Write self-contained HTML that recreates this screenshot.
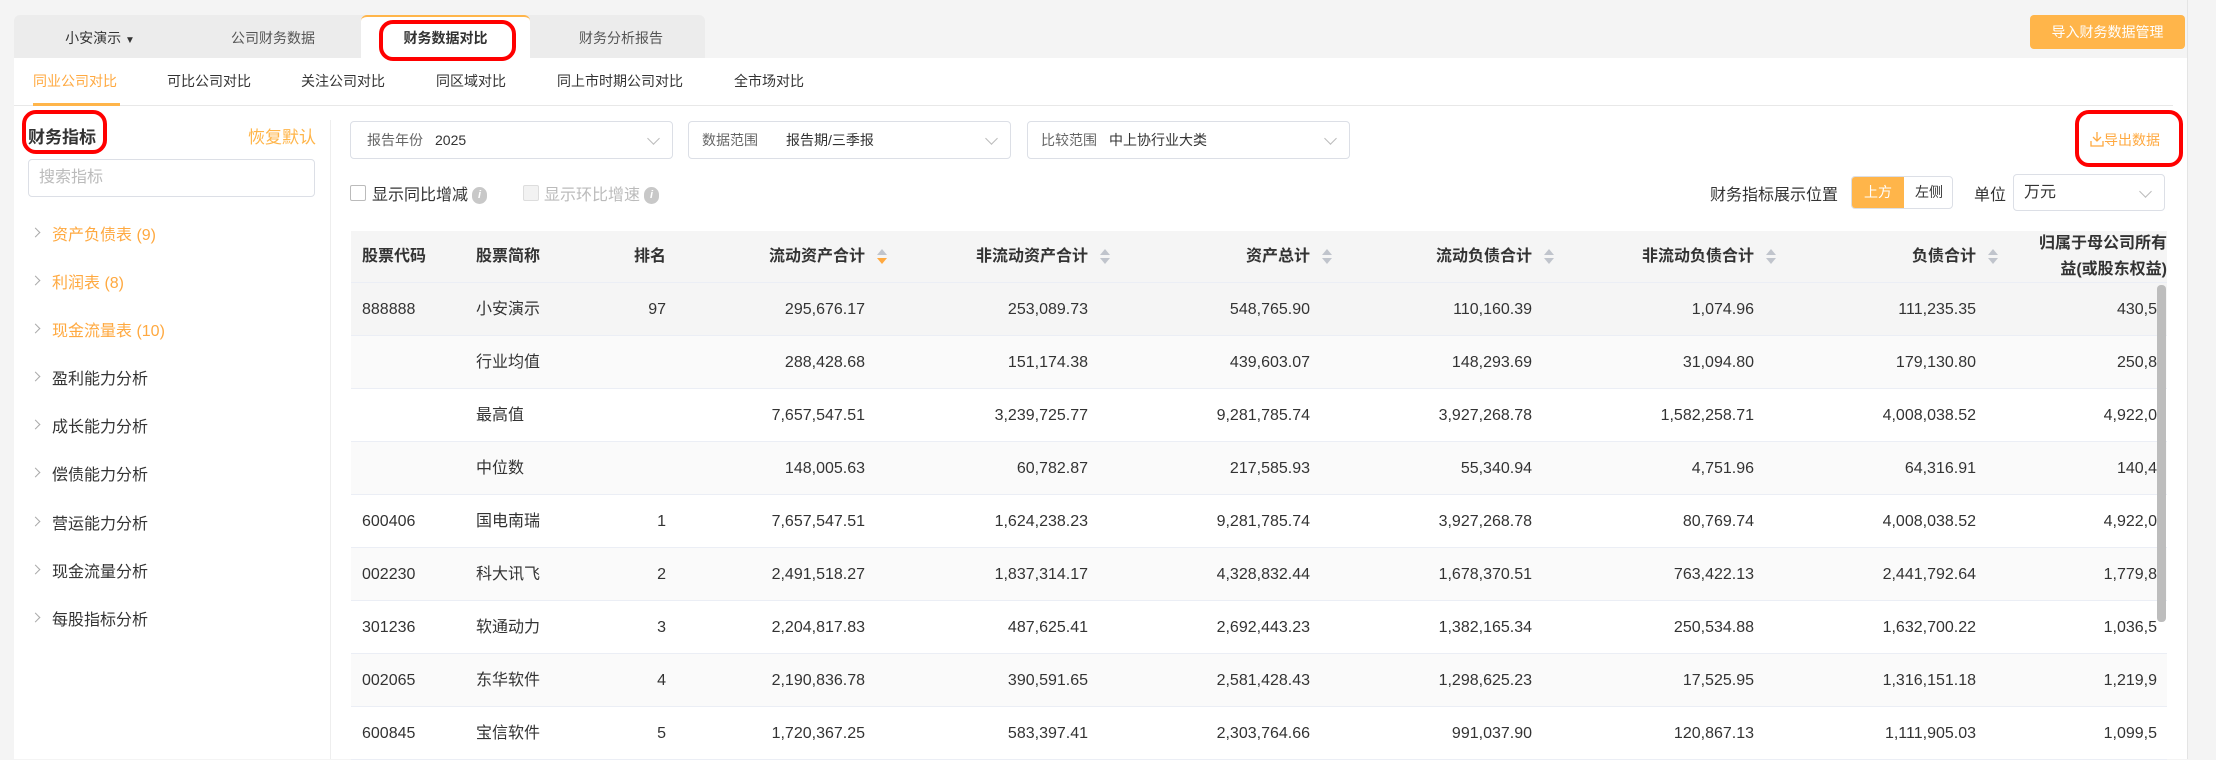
<!DOCTYPE html>
<html><head><meta charset="utf-8">
<style>
*{margin:0;padding:0;box-sizing:border-box}
body{width:2216px;height:759px;background:#f4f4f4;font-family:"Liberation Sans","Noto Sans CJK SC",sans-serif;color:#333;position:relative;overflow:hidden}
.a{position:absolute;white-space:nowrap}
.panel{position:absolute;left:14px;top:58px;width:2173px;height:701px;background:#fff}
.tabs{position:absolute;left:14px;top:15px;width:691px;height:43px;background:#ececec;border-radius:6px 6px 0 0}
.tab{position:absolute;top:15px;height:43px;line-height:46px;font-size:14px;color:#555;text-align:center}
.sub{position:absolute;top:71px;font-size:14px;color:#333}
.sel{position:absolute;top:121px;height:38px;border:1px solid #dcdfe6;border-radius:4px;background:#fff;font-size:14px;line-height:36px}
.chev{position:absolute;right:14px;top:12px;width:9px;height:9px;border-right:1px solid #bbb;border-bottom:1px solid #bbb;transform:rotate(45deg)}
.menu{position:absolute;left:52px;font-size:16px;color:#333}
.menu.o{color:#ffa940}
.arr{position:absolute;left:32px;width:7px;height:7px;border-right:1px solid #aaa;border-top:1px solid #aaa;transform:rotate(45deg)}
.red{position:absolute;border:4px solid #f00;border-radius:14px}
.row{position:absolute;left:351px;width:1816px;height:53px;border-bottom:1px solid #ebeef5;font-size:16px;color:#333}
.row div{position:absolute;top:0;line-height:53px;white-space:nowrap}
.r{text-align:right}
.hd{position:absolute;top:231px;left:351px;width:1816px;height:52px;background:#f5f5f5;border-bottom:1px solid #ebeef5;font-size:16px;font-weight:bold;color:#333}
.hd div{position:absolute;white-space:nowrap;line-height:52px}
.srt{position:absolute;width:10px;height:16px;top:18px}
.srt:before{content:"";position:absolute;left:0;top:0;border:5px solid transparent;border-bottom:6px solid #c0c4cc;border-top:0}
.srt:after{content:"";position:absolute;left:0;top:9px;border:5px solid transparent;border-top:6px solid #c0c4cc;border-bottom:0}
.srt.on:after{border-top-color:#ffa940}
.info{display:inline-block;width:15px;height:17px;border-radius:8px;background:#c8c8c8;color:#fff;font-size:11px;font-style:italic;line-height:17px;text-align:center;vertical-align:middle;margin-left:4px;font-weight:bold}
</style></head><body>
<div class="panel"></div>
<div class="a" style="left:2187px;top:0;width:29px;height:759px;border-left:1px solid #e4e4e4;background:#f4f4f4"></div>
<div class="tabs"></div>
<div class="a" style="left:361px;top:15px;width:169px;height:43px;background:#fff;border-top:2px solid #ffb54a;border-radius:6px 6px 0 0"></div>
<div class="tab" style="left:40px;width:120px;color:#333">小安演示 <span style="font-size:10px">▼</span></div>
<div class="tab" style="left:212px;width:122px">公司财务数据</div>
<div class="tab" style="left:361px;width:169px;color:#333;font-weight:bold">财务数据对比</div>
<div class="tab" style="left:560px;width:122px">财务分析报告</div>
<div class="red" style="left:379px;top:20px;width:137px;height:41px"></div>
<div class="a" style="left:2030px;top:15px;width:155px;height:34px;background:#ffb54a;border-radius:4px;color:#fff;font-size:14px;line-height:34px;text-align:center">导入财务数据管理</div>

<div class="sub" style="left:33px;color:#ffa940">同业公司对比</div>
<div class="sub" style="left:167px">可比公司对比</div>
<div class="sub" style="left:301px">关注公司对比</div>
<div class="sub" style="left:436px">同区域对比</div>
<div class="sub" style="left:557px">同上市时期公司对比</div>
<div class="sub" style="left:734px">全市场对比</div>
<div class="a" style="left:14px;top:105px;width:2159px;height:1px;background:#e8e8e8"></div>
<div class="a" style="left:33px;top:103px;width:87px;height:3px;background:#ffb54a"></div>

<div class="a" style="left:330px;top:120px;width:1px;height:639px;background:#eee"></div>
<div class="a" style="left:28px;top:123px;font-size:17px;font-weight:bold;color:#333">财务指标</div>
<div class="red" style="left:22px;top:110px;width:85px;height:44px"></div>
<div class="a" style="left:248px;top:123px;font-size:17px;color:#ffb54a">恢复默认</div>
<div class="a" style="left:28px;top:159px;width:287px;height:38px;border:1px solid #dcdfe6;border-radius:4px;font-size:16px;color:#bbb;line-height:36px;padding-left:10px">搜索指标</div>

<div class="arr" style="top:229px"></div><div class="menu o" style="top:221px">资产负债表 (9)</div>
<div class="arr" style="top:277px"></div><div class="menu o" style="top:269px">利润表 (8)</div>
<div class="arr" style="top:325px"></div><div class="menu o" style="top:317px">现金流量表 (10)</div>
<div class="arr" style="top:373px"></div><div class="menu" style="top:365px">盈利能力分析</div>
<div class="arr" style="top:421px"></div><div class="menu" style="top:413px">成长能力分析</div>
<div class="arr" style="top:469px"></div><div class="menu" style="top:461px">偿债能力分析</div>
<div class="arr" style="top:518px"></div><div class="menu" style="top:510px">营运能力分析</div>
<div class="arr" style="top:566px"></div><div class="menu" style="top:558px">现金流量分析</div>
<div class="arr" style="top:614px"></div><div class="menu" style="top:606px">每股指标分析</div>

<div class="sel" style="left:350px;width:323px"><span style="margin-left:16px;color:#666">报告年份</span><span style="margin-left:12px">2025</span><i class="chev"></i></div>
<div class="sel" style="left:688px;width:323px"><span style="margin-left:13px;color:#666">数据范围</span><span style="margin-left:28px">报告期/三季报</span><i class="chev"></i></div>
<div class="sel" style="left:1027px;width:323px"><span style="margin-left:13px;color:#666">比较范围</span><span style="margin-left:12px">中上协行业大类</span><i class="chev"></i></div>

<div class="a" style="left:2090px;top:130px;font-size:14px;color:#ffa940">
<svg width="14" height="16" viewBox="0 0 14 16" style="vertical-align:-2px"><path d="M7 1v9M3 6l4 4 4-4M1 10v5h12v-5" fill="none" stroke="#ffa940" stroke-width="1.3"/></svg>导出数据</div>
<div class="red" style="left:2075px;top:110px;width:108px;height:57px"></div>

<div class="a" style="left:350px;top:185px;width:16px;height:16px;border:1px solid #bbb;border-radius:2px"></div>
<div class="a" style="left:372px;top:181px;font-size:16px;color:#333">显示同比增减<span class="info">i</span></div>
<div class="a" style="left:523px;top:185px;width:16px;height:16px;border:1px solid #ddd;background:#f2f2f2;border-radius:2px"></div>
<div class="a" style="left:544px;top:181px;font-size:16px;color:#bbb">显示环比增速<span class="info">i</span></div>

<div class="a" style="left:1710px;top:181px;font-size:16px;color:#333">财务指标展示位置</div>
<div class="a" style="left:1851px;top:176px;width:102px;height:33px;border:1px solid #dcdfe6;border-radius:4px;overflow:hidden;font-size:14px;line-height:31px">
<span style="position:absolute;left:0;top:0;width:52px;height:33px;background:#ffb54a;color:#fff;text-align:center">上方</span>
<span style="position:absolute;left:52px;top:0;width:50px;text-align:center">左侧</span></div>
<div class="a" style="left:1974px;top:181px;font-size:16px">单位</div>
<div class="sel" style="left:2013px;top:174px;width:152px;height:37px;font-size:16px"><span style="margin-left:10px">万元</span><i class="chev"></i></div>

<div class="hd">
<div style="left:11px">股票代码</div>
<div style="left:125px">股票简称</div>
<div style="left:275px;width:40px" class="r">排名</div>
<div style="right:1302px">流动资产合计</div><i class="srt on" style="left:526px"></i>
<div style="right:1079px">非流动资产合计</div><i class="srt" style="left:749px"></i>
<div style="right:857px">资产总计</div><i class="srt" style="left:971px"></i>
<div style="right:635px">流动负债合计</div><i class="srt" style="left:1193px"></i>
<div style="right:413px">非流动负债合计</div><i class="srt" style="left:1415px"></i>
<div style="right:191px">负债合计</div><i class="srt" style="left:1637px"></i>
<div style="right:0;line-height:26px;top:0;text-align:right">归属于母公司所有<br>益(或股东权益)</div>
</div>

<div id="rows"></div>
<div class="a" style="left:2157px;top:285px;width:9px;height:337px;background:#bdbdbd;border-radius:4px"></div>
<script>
var d=[["888888","小安演示","97","295,676.17","253,089.73","548,765.90","110,160.39","1,074.96","111,235.35","430,5","#f5f5f5"],
["","行业均值","","288,428.68","151,174.38","439,603.07","148,293.69","31,094.80","179,130.80","250,8","#fafafa"],
["","最高值","","7,657,547.51","3,239,725.77","9,281,785.74","3,927,268.78","1,582,258.71","4,008,038.52","4,922,0","#fff"],
["","中位数","","148,005.63","60,782.87","217,585.93","55,340.94","4,751.96","64,316.91","140,4","#fafafa"],
["600406","国电南瑞","1","7,657,547.51","1,624,238.23","9,281,785.74","3,927,268.78","80,769.74","4,008,038.52","4,922,0","#fff"],
["002230","科大讯飞","2","2,491,518.27","1,837,314.17","4,328,832.44","1,678,370.51","763,422.13","2,441,792.64","1,779,8","#fafafa"],
["301236","软通动力","3","2,204,817.83","487,625.41","2,692,443.23","1,382,165.34","250,534.88","1,632,700.22","1,036,5","#fff"],
["002065","东华软件","4","2,190,836.78","390,591.65","2,581,428.43","1,298,625.23","17,525.95","1,316,151.18","1,219,9","#fafafa"],
["600845","宝信软件","5","1,720,367.25","583,397.41","2,303,764.66","991,037.90","120,867.13","1,111,905.03","1,099,5","#fff"]];
var R=[1302,1079,857,635,413,191,10];var h="";
d.forEach(function(r,i){var t=283+i*53;
h+='<div class="row" style="top:'+t+'px;background:'+r[10]+'"><div style="left:11px">'+r[0]+'</div><div style="left:125px">'+r[1]+'</div><div class="r" style="left:275px;width:40px">'+r[2]+'</div>';
for(var k=0;k<7;k++)h+='<div class="r" style="right:'+R[k]+'px">'+r[3+k]+'</div>';
h+='</div>';});
document.getElementById("rows").innerHTML=h;
</script>
</body></html>
